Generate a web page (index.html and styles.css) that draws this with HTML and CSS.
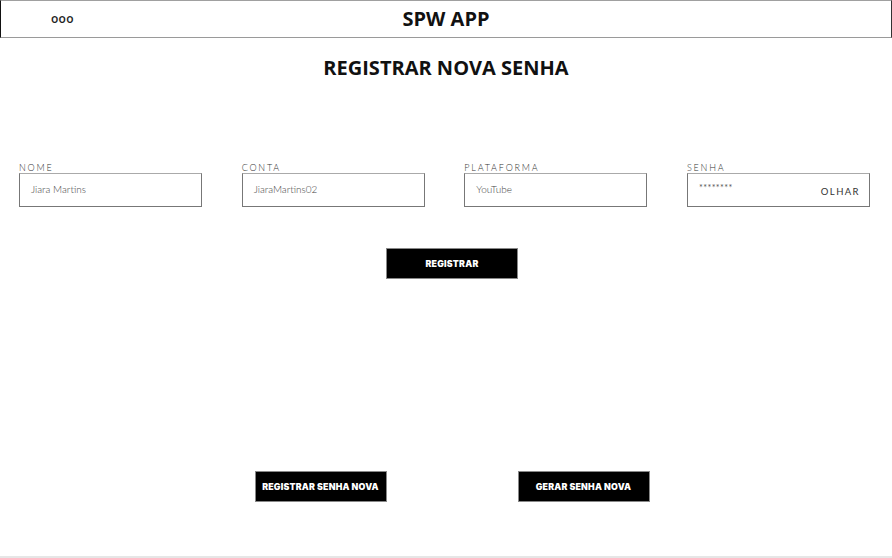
FILE: index.html
```html
<!DOCTYPE html>
<html lang="pt">
<head>
<meta charset="utf-8">
<title>SPW APP</title>
<link rel="stylesheet" href="styles.css">
</head>
<body>
<div class="page">
  <header class="topbar">
    <span class="menu">ooo</span>
    <span class="brand">SPW APP</span>
  </header>
  <main class="content">
    <h1 class="title">REGISTRAR NOVA SENHA</h1>
    <form class="fields">
      <label class="field">
        <span class="label">NOME</span>
        <span class="input">Jiara Martins</span>
      </label>
      <label class="field">
        <span class="label">CONTA</span>
        <span class="input">JiaraMartins02</span>
      </label>
      <label class="field">
        <span class="label">PLATAFORMA</span>
        <span class="input">YouTube</span>
      </label>
      <label class="field">
        <span class="label">SENHA</span>
        <span class="input input-pass"><span class="stars">********</span><span class="look">OLHAR</span></span>
      </label>
    </form>
    <div class="center-row">
      <button class="btn" type="button">REGISTRAR</button>
    </div>
    <div class="bottom-row">
      <button class="btn" type="button">REGISTRAR SENHA NOVA</button>
      <button class="btn" type="button">GERAR SENHA NOVA</button>
    </div>
  </main>
</div>
</body>
</html>
```

FILE: styles.css
```css
* { box-sizing: border-box; }
html, body { margin: 0; padding: 0; background: #fff; }
body { font-family: "Open Sans", "Liberation Sans", sans-serif; color: #111; }
.page {
  width: 892px;
  height: 558px;
  display: flex;
  flex-direction: column;
  border-bottom: 2px solid #e6e6e6;
}
.topbar {
  position: relative;
  height: 38px;
  border-top: 1px solid #a0a0a0;
  border-bottom: 1px solid #9a9a9a;
  border-left: 1px solid #111;
  border-right: 1px solid #333;
  display: flex;
  align-items: center;
  justify-content: center;
}
.menu {
  position: absolute;
  left: 50px;
  top: 9px;
  font-size: 12px;
  font-weight: 600;
  letter-spacing: 0.3px;
  color: #222;
}
.brand {
  font-size: 20px;
  font-weight: 700;
  color: #111;
  line-height: 1;
}
.content {
  flex: 1;
  display: flex;
  flex-direction: column;
}
.title {
  margin: 16px 0 0;
  text-align: center;
  font-size: 20px;
  font-weight: 700;
  line-height: 28px;
  color: #111;
}
.fields {
  margin: 81px 0 0 19px;
  width: 851px;
  display: grid;
  grid-template-columns: repeat(4, 183px);
  justify-content: space-between;
}
.field { display: flex; flex-direction: column; }
.label {
  font-family: "Lato", "Open Sans", sans-serif;
  font-size: 9px;
  font-weight: 300;
  letter-spacing: 1.8px;
  color: #333;
  line-height: 10px;
}
.input {
  height: 34px;
  border: 1px solid #777;
  border-top-color: #aaa;
  display: flex;
  align-items: center;
  justify-content: space-between;
  padding: 0 9px 3px 11px;
  font-family: "Lato", "Open Sans", sans-serif;
  font-size: 10px;
  font-weight: 300;
  color: #444;
}
.stars { font-size: 9px; font-weight: 400; letter-spacing: 0.4px; margin-top: -2px; color: #555; }
.look { font-size: 9.5px; font-weight: 400; letter-spacing: 1.4px; color: #333; padding-top: 5px; }
.center-row {
  margin-top: 41px;
  display: flex;
  justify-content: center;
  padding-left: 12px;
}
.btn {
  width: 132px;
  height: 31px;
  border: 1px solid #888;
  background: #000;
  color: #fff;
  font-family: "Inter", "Liberation Sans", sans-serif;
  font-size: 8.8px;
  font-weight: 900;
  letter-spacing: 0.2px;
  padding: 0;
  cursor: pointer;
}
.bottom-row {
  margin-top: 192px;
  display: flex;
  justify-content: center;
  gap: 131px;
  padding-left: 12px;
}
```
